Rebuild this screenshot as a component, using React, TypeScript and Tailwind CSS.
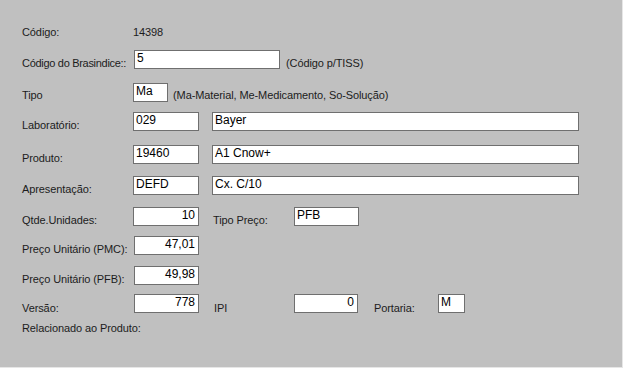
import React from "react";

const lbl = "text-[11px] leading-[13px] text-[#1c1c1c] tracking-[-0.1px] whitespace-nowrap";
const inp =
  "h-[19px] bg-white border border-[#6f6f6f] text-[12px] leading-[12px] text-black px-[2px] pt-[1px] whitespace-nowrap overflow-hidden";
const row = "flex items-start h-[19px]";

function Box({ w, v, right }: { w: string; v: string; right?: boolean }) {
  return <div className={`${inp} ${w} ${right ? "text-right pr-[3px]" : ""}`}>{v}</div>;
}

export default function App() {
  return (
    <div className="w-[623px] h-[368px] bg-[#c0c0c0] border-r border-b border-[#e6e6e6]">
      <div className="flex flex-col pl-[22px]" style={{ fontFamily: "'Liberation Sans', Arial, sans-serif" }}>
        {/* Código */}
        <div className="flex items-start mt-[26px] h-[13px]">
          <div className={`${lbl} w-[111px]`}>Código:</div>
          <div className={lbl}>14398</div>
        </div>
        {/* Brasindice */}
        <div className={`${row} mt-[11px]`}>
          <div className={`${lbl} w-[112px] pt-[7px] tracking-[-0.3px]`}>Código do Brasindice::</div>
          <Box w="w-[146px]" v="5" />
          <div className={`${lbl} pt-[7px] ml-[6px]`}>(Código p/TISS)</div>
        </div>
        {/* Tipo */}
        <div className={`${row} mt-[14px]`}>
          <div className={`${lbl} w-[111px] pt-[6px]`}>Tipo</div>
          <Box w="w-[35px]" v="Ma" />
          <div className={`${lbl} pt-[6px] ml-[5px]`}>(Ma-Material, Me-Medicamento, So-Solução)</div>
        </div>
        {/* Laboratório */}
        <div className={`${row} mt-[10px]`}>
          <div className={`${lbl} w-[111px] pt-[7px]`}>Laboratório:</div>
          <Box w="w-[66px]" v="029" />
          <div className="w-[13px]" />
          <Box w="w-[367px]" v="Bayer" />
        </div>
        {/* Produto */}
        <div className={`${row} mt-[14px]`}>
          <div className={`${lbl} w-[111px] pt-[7px]`}>Produto:</div>
          <Box w="w-[66px]" v="19460" />
          <div className="w-[13px]" />
          <Box w="w-[367px]" v="A1 Cnow+" />
        </div>
        {/* Apresentação */}
        <div className={`${row} mt-[12px]`}>
          <div className={`${lbl} w-[111px] pt-[7px]`}>Apresentação:</div>
          <Box w="w-[66px]" v="DEFD" />
          <div className="w-[13px]" />
          <Box w="w-[367px]" v="Cx. C/10" />
        </div>
        {/* Qtde */}
        <div className={`${row} mt-[12px]`}>
          <div className={`${lbl} w-[111px] pt-[7px]`}>Qtde.Unidades:</div>
          <Box w="w-[66px]" v="10" right />
          <div className={`${lbl} w-[81px] pt-[7px] ml-[14px]`}>Tipo Preço:</div>
          <Box w="w-[65px]" v="PFB" />
        </div>
        {/* PMC */}
        <div className={`${row} mt-[10px]`}>
          <div className={`${lbl} w-[112px] pt-[7px]`}>Preço Unitário (PMC):</div>
          <Box w="w-[65px]" v="47,01" right />
        </div>
        {/* PFB */}
        <div className={`${row} mt-[11px]`}>
          <div className={`${lbl} w-[112px] pt-[7px]`}>Preço Unitário (PFB):</div>
          <Box w="w-[65px]" v="49,98" right />
        </div>
        {/* Versão */}
        <div className={`${row} mt-[9px]`}>
          <div className={`${lbl} w-[112px] pt-[8px]`}>Versão:</div>
          <Box w="w-[65px]" v="778" right />
          <div className={`${lbl} w-[80px] pt-[8px] ml-[15px]`}>IPI</div>
          <Box w="w-[64px]" v="0" right />
          <div className={`${lbl} w-[64px] pt-[8px] ml-[16px]`}>Portaria:</div>
          <Box w="w-[27px]" v="M" />
        </div>
        {/* Relacionado */}
        <div className="flex items-start mt-[9px]">
          <div className={lbl}>Relacionado ao Produto:</div>
        </div>
      </div>
    </div>
  );
}
